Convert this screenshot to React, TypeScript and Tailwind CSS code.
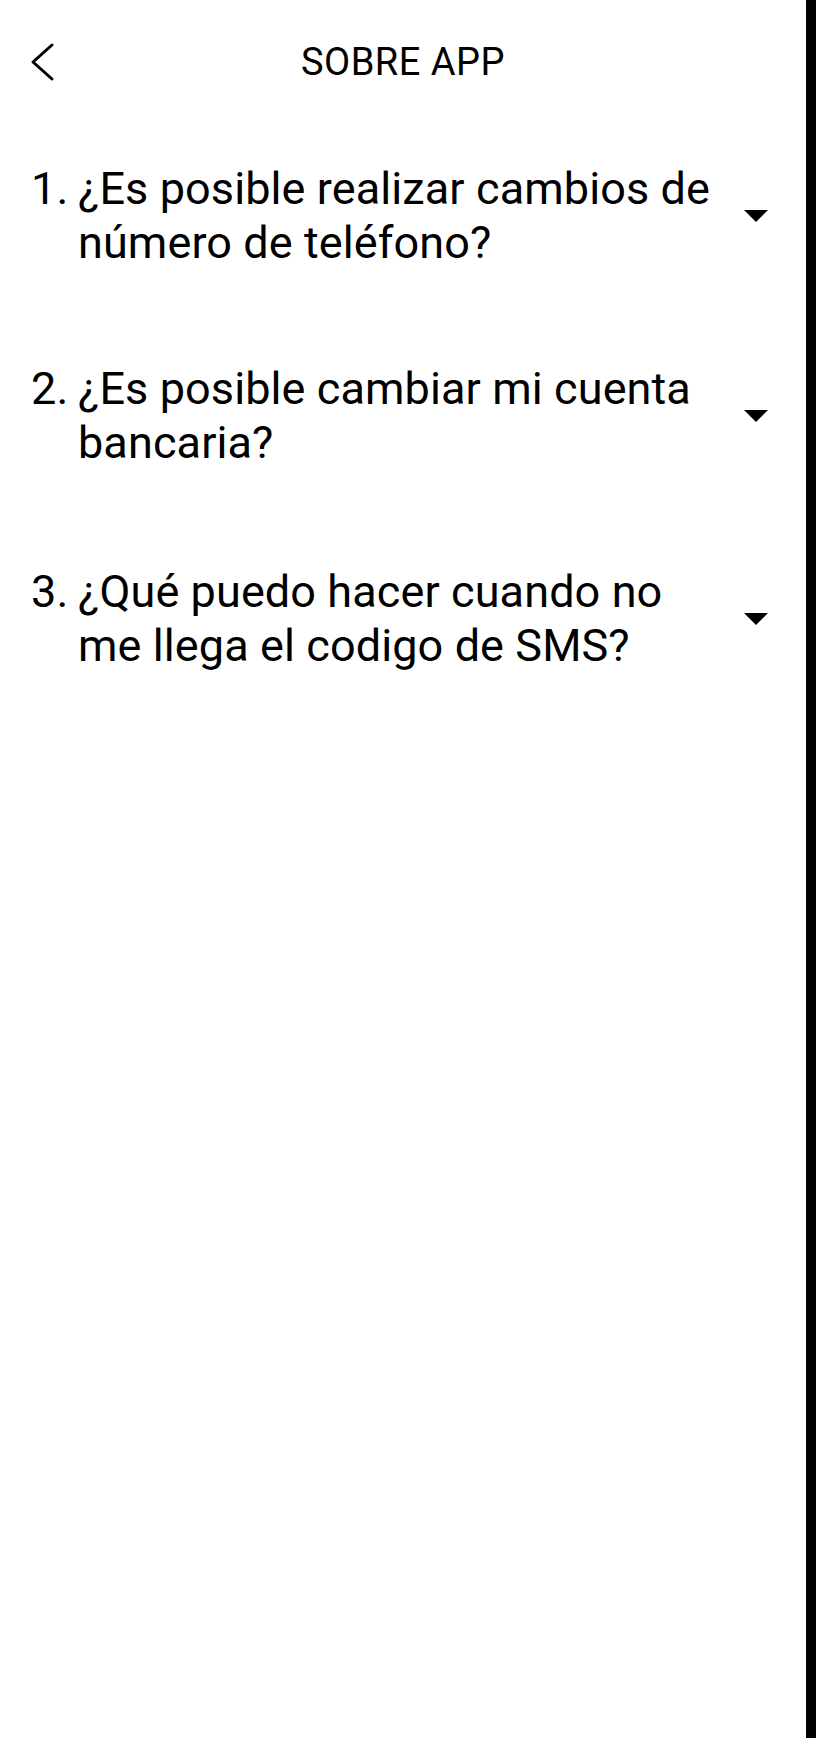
import { useState } from "react";

const faqs = [
  {
    id: 1,
    lines: ["¿Es posible realizar cambios de", "número de teléfono?"],
    gap: "mt-0",
  },
  {
    id: 2,
    lines: ["¿Es posible cambiar mi cuenta", "bancaria?"],
    gap: "mt-[92px]",
  },
  {
    id: 3,
    lines: ["¿Qué puedo hacer cuando no", "me llega el codigo de SMS?"],
    gap: "mt-[95px]",
  },
];

function DropArrow() {
  return (
    <svg width="24" height="12" viewBox="0 0 24 12" fill="#000">
      <path d="M0 0 L24 0 L12 12 Z" />
    </svg>
  );
}

export default function App() {
  const [open, setOpen] = useState<number | null>(null);

  return (
    <div className="flex min-h-[1738px] w-full font-['Roboto',sans-serif] text-black">
      <div className="flex-1 bg-white">
        {/* Header */}
        <div className="grid h-[124px] grid-cols-[1fr_auto_1fr] items-center">
          <button className="flex items-center pl-[29px]">
            <svg width="26" height="40" viewBox="0 0 26 40" fill="none">
              <path
                d="M23 3 L4 20 L23 37"
                stroke="#000"
                strokeWidth="3"
                strokeLinecap="round"
                strokeLinejoin="round"
              />
            </svg>
          </button>
          <h1 className="text-[38px] leading-[44px] tracking-[0.5px]">SOBRE APP</h1>
          <div />
        </div>

        {/* Questions */}
        <div className="flex flex-col pt-[38px]">
          {faqs.map((faq) => (
            <button
              key={faq.id}
              onClick={() => setOpen(open === faq.id ? null : faq.id)}
              className={`${faq.gap} flex items-center pl-[31px] pr-[38px] text-left`}
            >
              <div className="flex flex-1 text-[45px] leading-[54px] tracking-[0.1px]">
                <span className="w-[47px] shrink-0">{faq.id}.</span>
                <div className="whitespace-nowrap">
                  {faq.lines.map((line) => (
                    <div key={line}>{line}</div>
                  ))}
                </div>
              </div>
              <DropArrow />
            </button>
          ))}
        </div>
      </div>
      <div className="w-[10px] bg-black" />
    </div>
  );
}
